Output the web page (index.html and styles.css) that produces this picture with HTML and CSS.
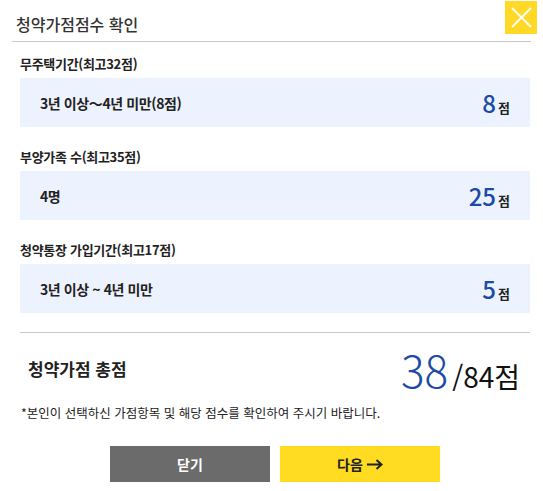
FILE: index.html
```html
<!DOCTYPE html>
<html lang="ko">
<head>
    <meta charset="UTF-8">
    <title>청약가점점수 확인</title>
    <link rel="stylesheet" href="styles.css">
</head>
<body>
    <div class="popup">
        <div class="head">
            <h1 class="title">청약가점점수 확인</h1>
            <button class="close" type="button" aria-label="닫기">
                <svg width="21" height="21" viewBox="0 0 21 21">
                    <path d="M1 1 L20 20 M20 1 L1 20" stroke="#fff" stroke-width="1.8" fill="none"/>
                </svg>
            </button>
        </div>

        <div class="content">
            <div class="item">
                <p class="label">무주택기간(최고32점)</p>
                <div class="panel">
                    <span class="value">3년 이상～4년 미만(8점)</span>
                    <span class="score"><em>8</em>점</span>
                </div>
            </div>
            <div class="item">
                <p class="label">부양가족 수(최고35점)</p>
                <div class="panel">
                    <span class="value">4명</span>
                    <span class="score"><em>25</em>점</span>
                </div>
            </div>
            <div class="item">
                <p class="label">청약통장 가입기간(최고17점)</p>
                <div class="panel">
                    <span class="value">3년 이상 ~ 4년 미만</span>
                    <span class="score"><em>5</em>점</span>
                </div>
            </div>

            <div class="total">
                <span class="total-label">청약가점 총점</span>
                <span class="total-score"><em>38</em>/84점</span>
            </div>

            <p class="note">*본인이 선택하신 가점항목 및 해당 점수를 확인하여 주시기 바랍니다.</p>

            <div class="buttons">
                <button class="btn btn-close" type="button">닫기</button>
                <button class="btn btn-next" type="button">다음
                    <svg width="16" height="11" viewBox="0 0 16 11">
                        <path d="M0 5.5 H14 M9.5 1 L14.5 5.5 L9.5 10" stroke="#222" stroke-width="2" fill="none"/>
                    </svg>
                </button>
            </div>
        </div>
    </div>
</body>
</html>
```

FILE: styles.css
```css
* {
    margin: 0;
    padding: 0;
    box-sizing: border-box;
}
body {
    background: #fff;
    font-family: "Noto Sans CJK KR", "Noto Sans", sans-serif;
    color: #222;
}
.popup {
    width: 543px;
}
.head {
    display: flex;
    justify-content: space-between;
    align-items: flex-start;
    height: 42px;
    margin: 0 12px;
    padding-left: 4px;
    border-bottom: 1px solid #c8c8c8;
}
.title {
    font-size: 16px;
    font-weight: 500;
    line-height: 22px;
    padding-top: 13px;
    color: #333;
}
.close {
    width: 32px;
    height: 33px;
    margin-top: 1px;
    margin-right: -6px;
    border: 0;
    background: #ffd925;
    display: flex;
    align-items: center;
    justify-content: center;
}
.content {
    padding: 0 13px 0 20px;
}
.item {
    margin-top: 20px;
}
.item:first-child {
    margin-top: 12px;
}
.label {
    font-size: 13px;
    font-weight: 700;
    line-height: 20px;
    letter-spacing: -0.3px;
    margin-bottom: 4px;
}
.panel {
    display: flex;
    justify-content: space-between;
    align-items: center;
    height: 49px;
    padding: 0 20px;
    background: #edf3fe;
}
.value {
    font-size: 14px;
    font-weight: 700;
    letter-spacing: -0.4px;
    color: #222;
}
.score {
    font-size: 13px;
    font-weight: 700;
}
.score em {
    font-style: normal;
    font-size: 24px;
    font-weight: 500;
    color: #1b4ba6;
    margin-right: 2px;
}
.total {
    display: flex;
    justify-content: space-between;
    align-items: center;
    height: 72px;
    margin-top: 19px;
    padding: 0 10px 0 8px;
    border-top: 1px solid #c8c8c8;
}
.total-label {
    font-size: 17px;
    font-weight: 700;
}
.total-score {
    font-size: 28px;
    font-weight: 400;
    color: #111;
}
.total-score em {
    font-style: normal;
    font-size: 44px;
    font-weight: 300;
    color: #1b4ba6;
    margin-right: 4px;
}
.note {
    font-size: 12.5px;
    line-height: 18px;
    margin-left: 1px;
    color: #222;
}
.buttons {
    display: flex;
    justify-content: center;
    gap: 10px;
    margin-top: 24px;
}
.btn {
    width: 160px;
    height: 36px;
    border: 0;
    font-family: inherit;
    font-size: 14px;
    font-weight: 700;
    display: flex;
    align-items: center;
    justify-content: center;
    gap: 4px;
}
.btn-close {
    background: #6b6b6b;
    color: #fff;
}
.btn-next {
    background: #ffdc22;
    color: #222;
}
```
